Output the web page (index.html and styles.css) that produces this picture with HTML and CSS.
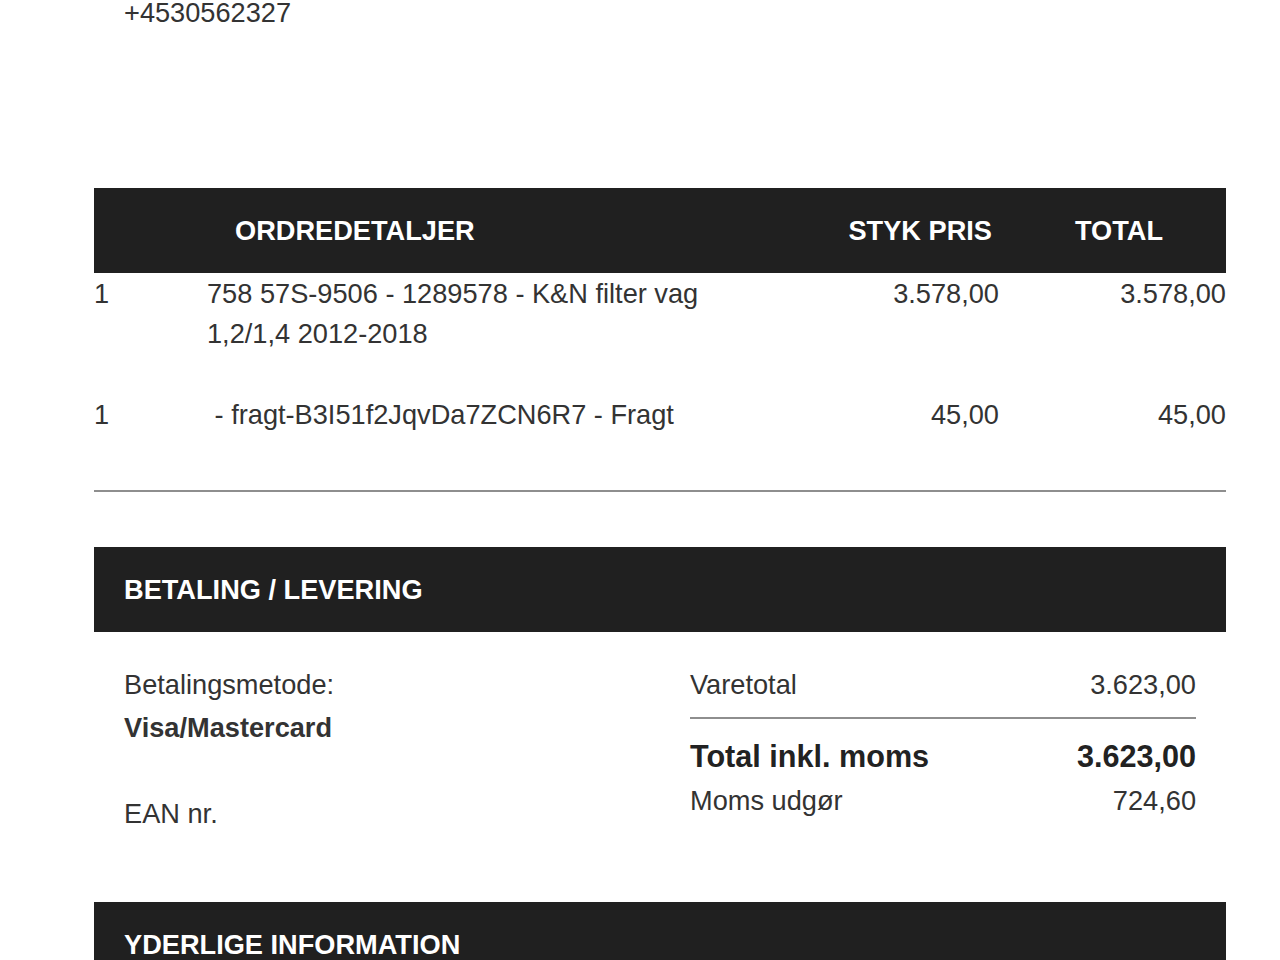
FILE: index.html
```html
<!DOCTYPE html>
<html lang="da">
<head>
<meta charset="utf-8">
<title>Ordrebekræftelse</title>
<link rel="stylesheet" href="styles.css">
</head>
<body>
<div class="page">
  <div class="contact">+4530562327</div>

  <section class="order">
    <div class="order-head">
      <div class="h-desc">ORDREDETALJER</div>
      <div class="h-price">STYK PRIS</div>
      <div class="h-total">TOTAL</div>
    </div>
    <div class="order-row">
      <div class="qty">1</div>
      <div class="desc">758 57S-9506 - 1289578 - K&amp;N filter vag<br>1,2/1,4 2012-2018</div>
      <div class="price">3.578,00</div>
      <div class="total">3.578,00</div>
    </div>
    <div class="order-row">
      <div class="qty">1</div>
      <div class="desc">&nbsp;- fragt-B3I51f2JqvDa7ZCN6R7 - Fragt</div>
      <div class="price">45,00</div>
      <div class="total">45,00</div>
    </div>
  </section>

  <hr class="divider">

  <section class="payment">
    <div class="bar">BETALING / LEVERING</div>
    <div class="payment-body">
      <div class="method">
        <div class="line">Betalingsmetode:</div>
        <div class="line strong">Visa/Mastercard</div>
        <div class="line">&nbsp;</div>
        <div class="line">EAN nr.</div>
      </div>
      <div class="sums">
        <div class="sum-row subtotal"><span>Varetotal</span><span>3.623,00</span></div>
        <div class="sum-row grand"><span>Total inkl. moms</span><span>3.623,00</span></div>
        <div class="sum-row vat"><span>Moms udgør</span><span>724,60</span></div>
      </div>
    </div>
  </section>

  <section class="extra">
    <div class="bar">YDERLIGE INFORMATION</div>
  </section>
</div>
</body>
</html>
```

FILE: styles.css
```css
html, body {
  margin: 0;
  padding: 0;
  background: #ffffff;
}

body {
  font-family: Arial, "Liberation Sans", Helvetica, sans-serif;
  font-size: 27.2px;
  color: #333333;
  overflow: hidden;
}

.page {
  width: 1132px;
  margin-left: 94px;
}

.contact {
  padding-left: 30px;
  line-height: 26px;
  margin-bottom: 162px;
}

.order-head,
.order-row {
  display: grid;
  grid-template-columns: 113px 1fr 200px 227px;
}

.order-head {
  background: #202020;
  color: #ffffff;
  font-weight: bold;
  height: 85px;
  align-items: center;
}

.h-desc {
  grid-column: 2;
  padding-left: 28px;
}

.h-price {
  text-align: right;
  padding-right: 7px;
}

.h-total {
  text-align: right;
  padding-right: 63px;
}

.order-row {
  line-height: 40px;
  padding-top: 1px;
  padding-bottom: 40px;
}

.order-row .price,
.order-row .total {
  text-align: right;
}

.divider {
  border: 0;
  height: 2px;
  background: #8e8e8e;
  margin: 15px 0 55px 0;
}

.bar {
  background: #202020;
  color: #ffffff;
  font-weight: bold;
  height: 85px;
  display: flex;
  align-items: center;
  padding-left: 30px;
}

.payment-body {
  display: grid;
  grid-template-columns: 566px 1fr;
  padding: 31px 30px 67px 30px;
  line-height: 43px;
}

.strong {
  font-weight: bold;
}

.sum-row {
  display: flex;
  justify-content: space-between;
}

.subtotal {
  padding-bottom: 11px;
  border-bottom: 2px solid #8e8e8e;
  margin-bottom: 16px;
}

.grand {
  font-weight: bold;
  font-size: 30.6px;
  color: #222222;
}

.vat {
  margin-top: 1px;
}
```
